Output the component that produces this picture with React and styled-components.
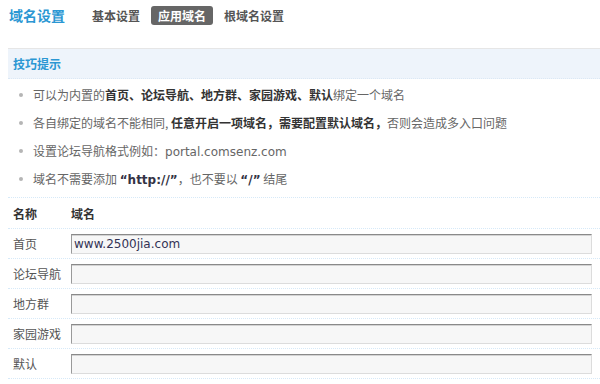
import React from 'react';
import styled, { createGlobalStyle } from 'styled-components';

const GlobalStyle = createGlobalStyle`
  html, body {
    margin: 0;
    padding: 0;
    background: #fff;
  }
  body {
    font-family: "Noto Sans CJK SC", "DejaVu Sans", sans-serif;
    font-size: 12px;
    color: #666;
  }
`;

const Page = styled.div`
  width: 600px;
  height: 384px;
  overflow: hidden;
  padding-left: 8px;
  box-sizing: border-box;
`;

const Header = styled.div`
  display: flex;
  align-items: center;
  height: 49px;
  padding-bottom: 18px;
  box-sizing: border-box;
  border-bottom: 1px solid #e6e6e6;
`;

const Title = styled.h1`
  margin: 0 0 0 1px;
  font-size: 14px;
  line-height: 19px;
  font-weight: bold;
  color: #2b97d3;
`;

const Tabs = styled.div`
  display: flex;
  gap: 4px;
  margin-left: 20px;
`;

const Tab = styled.span`
  padding: 0 7px;
  height: 19px;
  line-height: 19px;
  border-radius: 3px;
  font-weight: bold;
  color: ${p => (p.active ? '#fff' : '#555')};
  background: ${p => (p.active ? '#666' : 'transparent')};
`;

const TipBox = styled.div`
  height: 30px;
  display: flex;
  align-items: center;
  padding-left: 5px;
  background: #eef4fb;
  border-bottom: 1px dotted #dbe8f5;
  box-sizing: border-box;
`;

const TipTitle = styled.h3`
  margin: 0;
  font-size: 12px;
  font-weight: bold;
  color: #2b97d3;
`;

const TipList = styled.ul`
  list-style: none;
  margin: 0;
  padding: 2px 0 4px;
  border-bottom: 1px dotted #d6e9f8;
`;

const TipItem = styled.li`
  position: relative;
  height: 28px;
  line-height: 28px;
  padding-left: 25px;
  color: #666;

  &::before {
    content: '';
    position: absolute;
    left: 11px;
    top: 12px;
    width: 4px;
    height: 4px;
    border-radius: 50%;
    background: #b5b5b5;
  }
`;

const Strong = styled.b`
  color: #333;
`;

const Latin = styled.span`
  font-family: "DejaVu Sans", Verdana, sans-serif;
  color: ${p => (p.dark ? '#334' : '#666')};
  font-weight: ${p => (p.dark ? 'bold' : 'normal')};
`;

const Row = styled.div`
  display: flex;
  align-items: ${p => (p.head ? 'center' : 'flex-start')};
  height: ${p => (p.head ? '31px' : '30px')};
  padding-top: ${p => (p.head ? '0' : '5px')};
  box-sizing: border-box;
  border-bottom: 1px dotted #d6e9f8;
  color: ${p => (p.head ? '#333' : '#555')};
  font-weight: ${p => (p.head ? 'bold' : 'normal')};
`;

const Label = styled.span`
  width: 58px;
  padding-left: 5px;
  line-height: ${p => (p.head ? 'normal' : '20px')};
  flex-shrink: 0;
`;

const Input = styled.input`
  flex: 1;
  margin-right: 8px;
  height: 20px;
  box-sizing: border-box;
  padding: 0 2px;
  border: 1px solid;
  border-color: #8a8a8a #dcdcdc #dcdcdc #9a9a9a;
  box-shadow: inset 0 1px 0 #d4d4d4;
  background: #f7f7f7;
  font-family: "DejaVu Sans", Verdana, sans-serif;
  font-size: 12px;
  color: #335;
  outline: none;
`;

const rows = [
  { name: '首页', value: 'www.2500jia.com' },
  { name: '论坛导航', value: '' },
  { name: '地方群', value: '' },
  { name: '家园游戏', value: '' },
  { name: '默认', value: '' },
];

const App = () => (
  <>
    <GlobalStyle />
    <Page>
      <Header>
        <Title>域名设置</Title>
        <Tabs>
          <Tab>基本设置</Tab>
          <Tab active>应用域名</Tab>
          <Tab>根域名设置</Tab>
        </Tabs>
      </Header>

      <TipBox>
        <TipTitle>技巧提示</TipTitle>
      </TipBox>
      <TipList>
        <TipItem>
          可以为内置的<Strong>首页、论坛导航、地方群、家园游戏、默认</Strong>绑定一个域名
        </TipItem>
        <TipItem>
          各自绑定的域名不能相同, <Strong>任意开启一项域名，需要配置默认域名，</Strong>否则会造成多入口问题
        </TipItem>
        <TipItem>
          设置论坛导航格式例如：<Latin>portal.comsenz.com</Latin>
        </TipItem>
        <TipItem>
          域名不需要添加 <Latin dark>“http://”</Latin>，也不要以 <Latin dark>“/”</Latin> 结尾
        </TipItem>
      </TipList>

      <Row head>
        <Label head>名称</Label>
        <span>域名</span>
      </Row>
      {rows.map(r => (
        <Row key={r.name}>
          <Label>{r.name}</Label>
          <Input type="text" defaultValue={r.value} />
        </Row>
      ))}
    </Page>
  </>
);

export default App;
